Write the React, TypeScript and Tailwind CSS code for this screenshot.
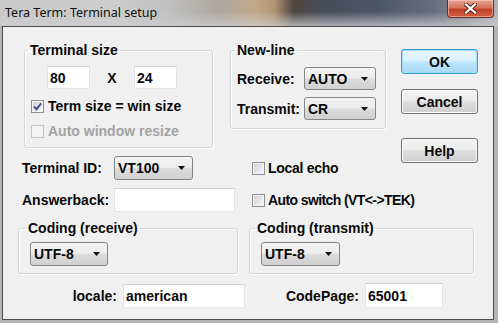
import React from "react";

function Checkbox({ checked, disabled }: { checked?: boolean; disabled?: boolean }) {
  return (
    <span
      className={
        disabled
          ? "flex h-[13px] w-[13px] shrink-0 items-center justify-center border border-[#c4c4c4] bg-[#f4f4f4]"
          : "flex h-[13px] w-[13px] shrink-0 items-center justify-center border border-[#8e8f8f] bg-[linear-gradient(135deg,#cfd1d5,#f6f6f6)] shadow-[inset_0_0_0_1px_#f4f4f4]"
      }
    >
      {checked && (
        <svg width="11" height="11" viewBox="0 0 11 11">
          <path d="M2 5.5 L4.5 8.2 L9.2 2.3" fill="none" stroke="#44578a" strokeWidth="2" />
        </svg>
      )}
    </span>
  );
}

function Combo({ value, className }: { value: string; className: string }) {
  return (
    <div
      className={`flex shrink-0 items-center justify-between rounded-[3px] border border-[#858585] bg-[linear-gradient(#f5f5f5,#ececec_48%,#dcdcdc_52%,#d0d0d0)] pl-[3px] pr-[7px] ${className}`}
    >
      <span>{value}</span>
      <svg width="7" height="4" viewBox="0 0 7 4">
        <path d="M0 0 H7 L3.5 4 Z" fill="#111" />
      </svg>
    </div>
  );
}

function TextBox({ value, className }: { value?: string; className: string }) {
  return (
    <div
      className={`flex shrink-0 items-center border border-[#e2e5e9] border-t-[#cfd3d8] bg-white pl-[2px] ${className}`}
    >
      {value}
    </div>
  );
}

function Button({ label, primary }: { label: string; primary?: boolean }) {
  return (
    <div
      className={
        primary
          ? "flex h-[25px] w-[77px] items-center justify-center rounded-[3px] border border-[#3c9fd2] bg-[linear-gradient(#e9f6fd,#d9f0fc_48%,#bee6fd_52%,#a7d9f5)] shadow-[inset_0_0_0_1px_#9fdcfa]"
          : "flex h-[25px] w-[77px] items-center justify-center rounded-[3px] border border-[#707070] bg-[linear-gradient(#f2f2f2,#ebebeb_48%,#dddddd_52%,#cfcfcf)] shadow-[inset_0_0_0_1px_#fcfcfc]"
      }
    >
      {label}
    </div>
  );
}

const fieldset =
  "shrink-0 rounded-[3px] border border-[#d3d7db] shadow-[inset_1px_1px_0_#ffffff,1px_1px_0_#ffffff]";

export default function App() {
  return (
    <div className="flex h-[323px] w-[498px] flex-col overflow-hidden bg-[#b4b4b8] font-['Liberation_Sans',Arial,sans-serif] text-[14px] leading-4 font-bold text-[#0a0a0a]">
      {/* glass title bar */}
      <div className="flex h-[26px] shrink-0 items-start justify-between bg-[linear-gradient(180deg,rgba(210,210,212,0)_45%,rgba(205,205,208,0.75)_100%),linear-gradient(90deg,#c9c9c9_0%,#cdcdcd_22%,#c0c0c0_34%,#aca79f_44%,#c2a98a_51%,#b49574_55%,#4f463f_59%,#474b58_64%,#4f5668_76%,#676d7e_87%,#8a8c97_94%,#b3b3b9_100%)]">
        <span className="pt-[5px] pl-[5px] font-['Noto_Sans',sans-serif] text-[12.5px] leading-4 font-normal text-[#111]">
          Tera Term: Terminal setup
        </span>
        <div className="mr-[4px] flex h-[18px] w-[47px] items-center justify-center rounded-b-[4px] border border-t-0 border-[#6b2a22] bg-[linear-gradient(#e7a795,#d7725a_45%,#c4412a_55%,#d0603f)] shadow-[inset_0_0_0_1px_rgba(255,220,210,0.5)]">
          <svg width="13" height="11" viewBox="0 0 13 11">
            <path d="M2 1.5 L11 9.5 M11 1.5 L2 9.5" stroke="#5a1f18" strokeWidth="4.2" strokeLinecap="square" />
            <path d="M2 1.5 L11 9.5 M11 1.5 L2 9.5" stroke="#ffffff" strokeWidth="2.3" strokeLinecap="square" />
          </svg>
        </div>
      </div>

      {/* client area */}
      <div className="mr-[4px] ml-[2px] flex h-[294px] shrink-0 flex-col border border-[#4a4a4a] bg-[#f0f0f0]">
        <div className="flex">
          <div className="flex w-[398px] shrink-0 flex-col">
            <div className="mt-[15px] ml-[21px] flex gap-[17px]">
              <fieldset className={`${fieldset} h-[106px] w-[189px]`}>
                <legend className="ml-[3px] px-[2px]">Terminal size</legend>
                <div className="mt-[8px] ml-[22px] flex items-center">
                  <TextBox value="80" className="h-[23px] w-[43px]" />
                  <span className="w-[44px] shrink-0 text-center">X</span>
                  <TextBox value="24" className="h-[23px] w-[43px]" />
                </div>
                <div className="mt-[9px] ml-[6px] flex items-center gap-[4px]">
                  <Checkbox checked />
                  <span>Term size = win size</span>
                </div>
                <div className="mt-[9px] ml-[6px] flex items-center gap-[4px] text-[#a3a3a3]">
                  <Checkbox disabled />
                  <span>Auto window resize</span>
                </div>
              </fieldset>
              <fieldset className={`${fieldset} h-[87px] w-[156px]`}>
                <legend className="ml-[4px] px-[2px]">New-line</legend>
                <div className="mt-[9px] ml-[6px] flex items-center">
                  <span className="w-[67px] shrink-0">Receive:</span>
                  <Combo value="AUTO" className="h-[23px] w-[72px]" />
                </div>
                <div className="mt-[7px] ml-[6px] flex items-center">
                  <span className="w-[67px] shrink-0">Transmit:</span>
                  <Combo value="CR" className="h-[23px] w-[72px]" />
                </div>
              </fieldset>
            </div>

            <div className="mt-[8px] ml-[19px] flex items-center">
              <span className="w-[92px] shrink-0">Terminal ID:</span>
              <Combo value="VT100" className="h-[24px] w-[79px]" />
              <div className="ml-[59px] flex shrink-0 items-center gap-[3px] whitespace-nowrap">
                <Checkbox />
                <span className="tracking-[-0.3px]">Local echo</span>
              </div>
            </div>

            <div className="mt-[8px] ml-[19px] flex items-center">
              <span className="w-[92px] shrink-0">Answerback:</span>
              <TextBox className="h-[24px] w-[121px]" />
              <div className="ml-[17px] flex shrink-0 items-center gap-[3px] whitespace-nowrap">
                <Checkbox />
                <span className="tracking-[-0.6px]">Auto switch (VT&lt;-&gt;TEK)</span>
              </div>
            </div>
          </div>

          <div className="mt-[22px] flex w-[77px] shrink-0 flex-col">
            <Button label="OK" primary />
            <div className="mt-[15px]">
              <Button label="Cancel" />
            </div>
            <div className="mt-[24px]">
              <Button label="Help" />
            </div>
          </div>
        </div>

        <div className="mt-[8px] ml-[15px] flex gap-[11px]">
          <fieldset className={`${fieldset} h-[54px] w-[220px]`}>
            <legend className="ml-[7px] px-[2px]">Coding (receive)</legend>
            <Combo value="UTF-8" className="mt-[6px] ml-[11px] h-[24px] w-[78px]" />
          </fieldset>
          <fieldset className={`${fieldset} h-[54px] w-[225px]`}>
            <legend className="ml-[5px] px-[2px]">Coding (transmit)</legend>
            <Combo value="UTF-8" className="mt-[6px] ml-[11px] h-[24px] w-[79px]" />
          </fieldset>
        </div>

        <div className="mt-[9px] flex items-center">
          <span className="w-[114px] shrink-0 text-right">locale:</span>
          <TextBox value="american" className="ml-[6px] h-[24px] w-[122px]" />
          <span className="w-[114px] shrink-0 text-right">CodePage:</span>
          <TextBox value="65001" className="ml-[6px] h-[25px] w-[78px]" />
        </div>
      </div>
    </div>
  );
}
